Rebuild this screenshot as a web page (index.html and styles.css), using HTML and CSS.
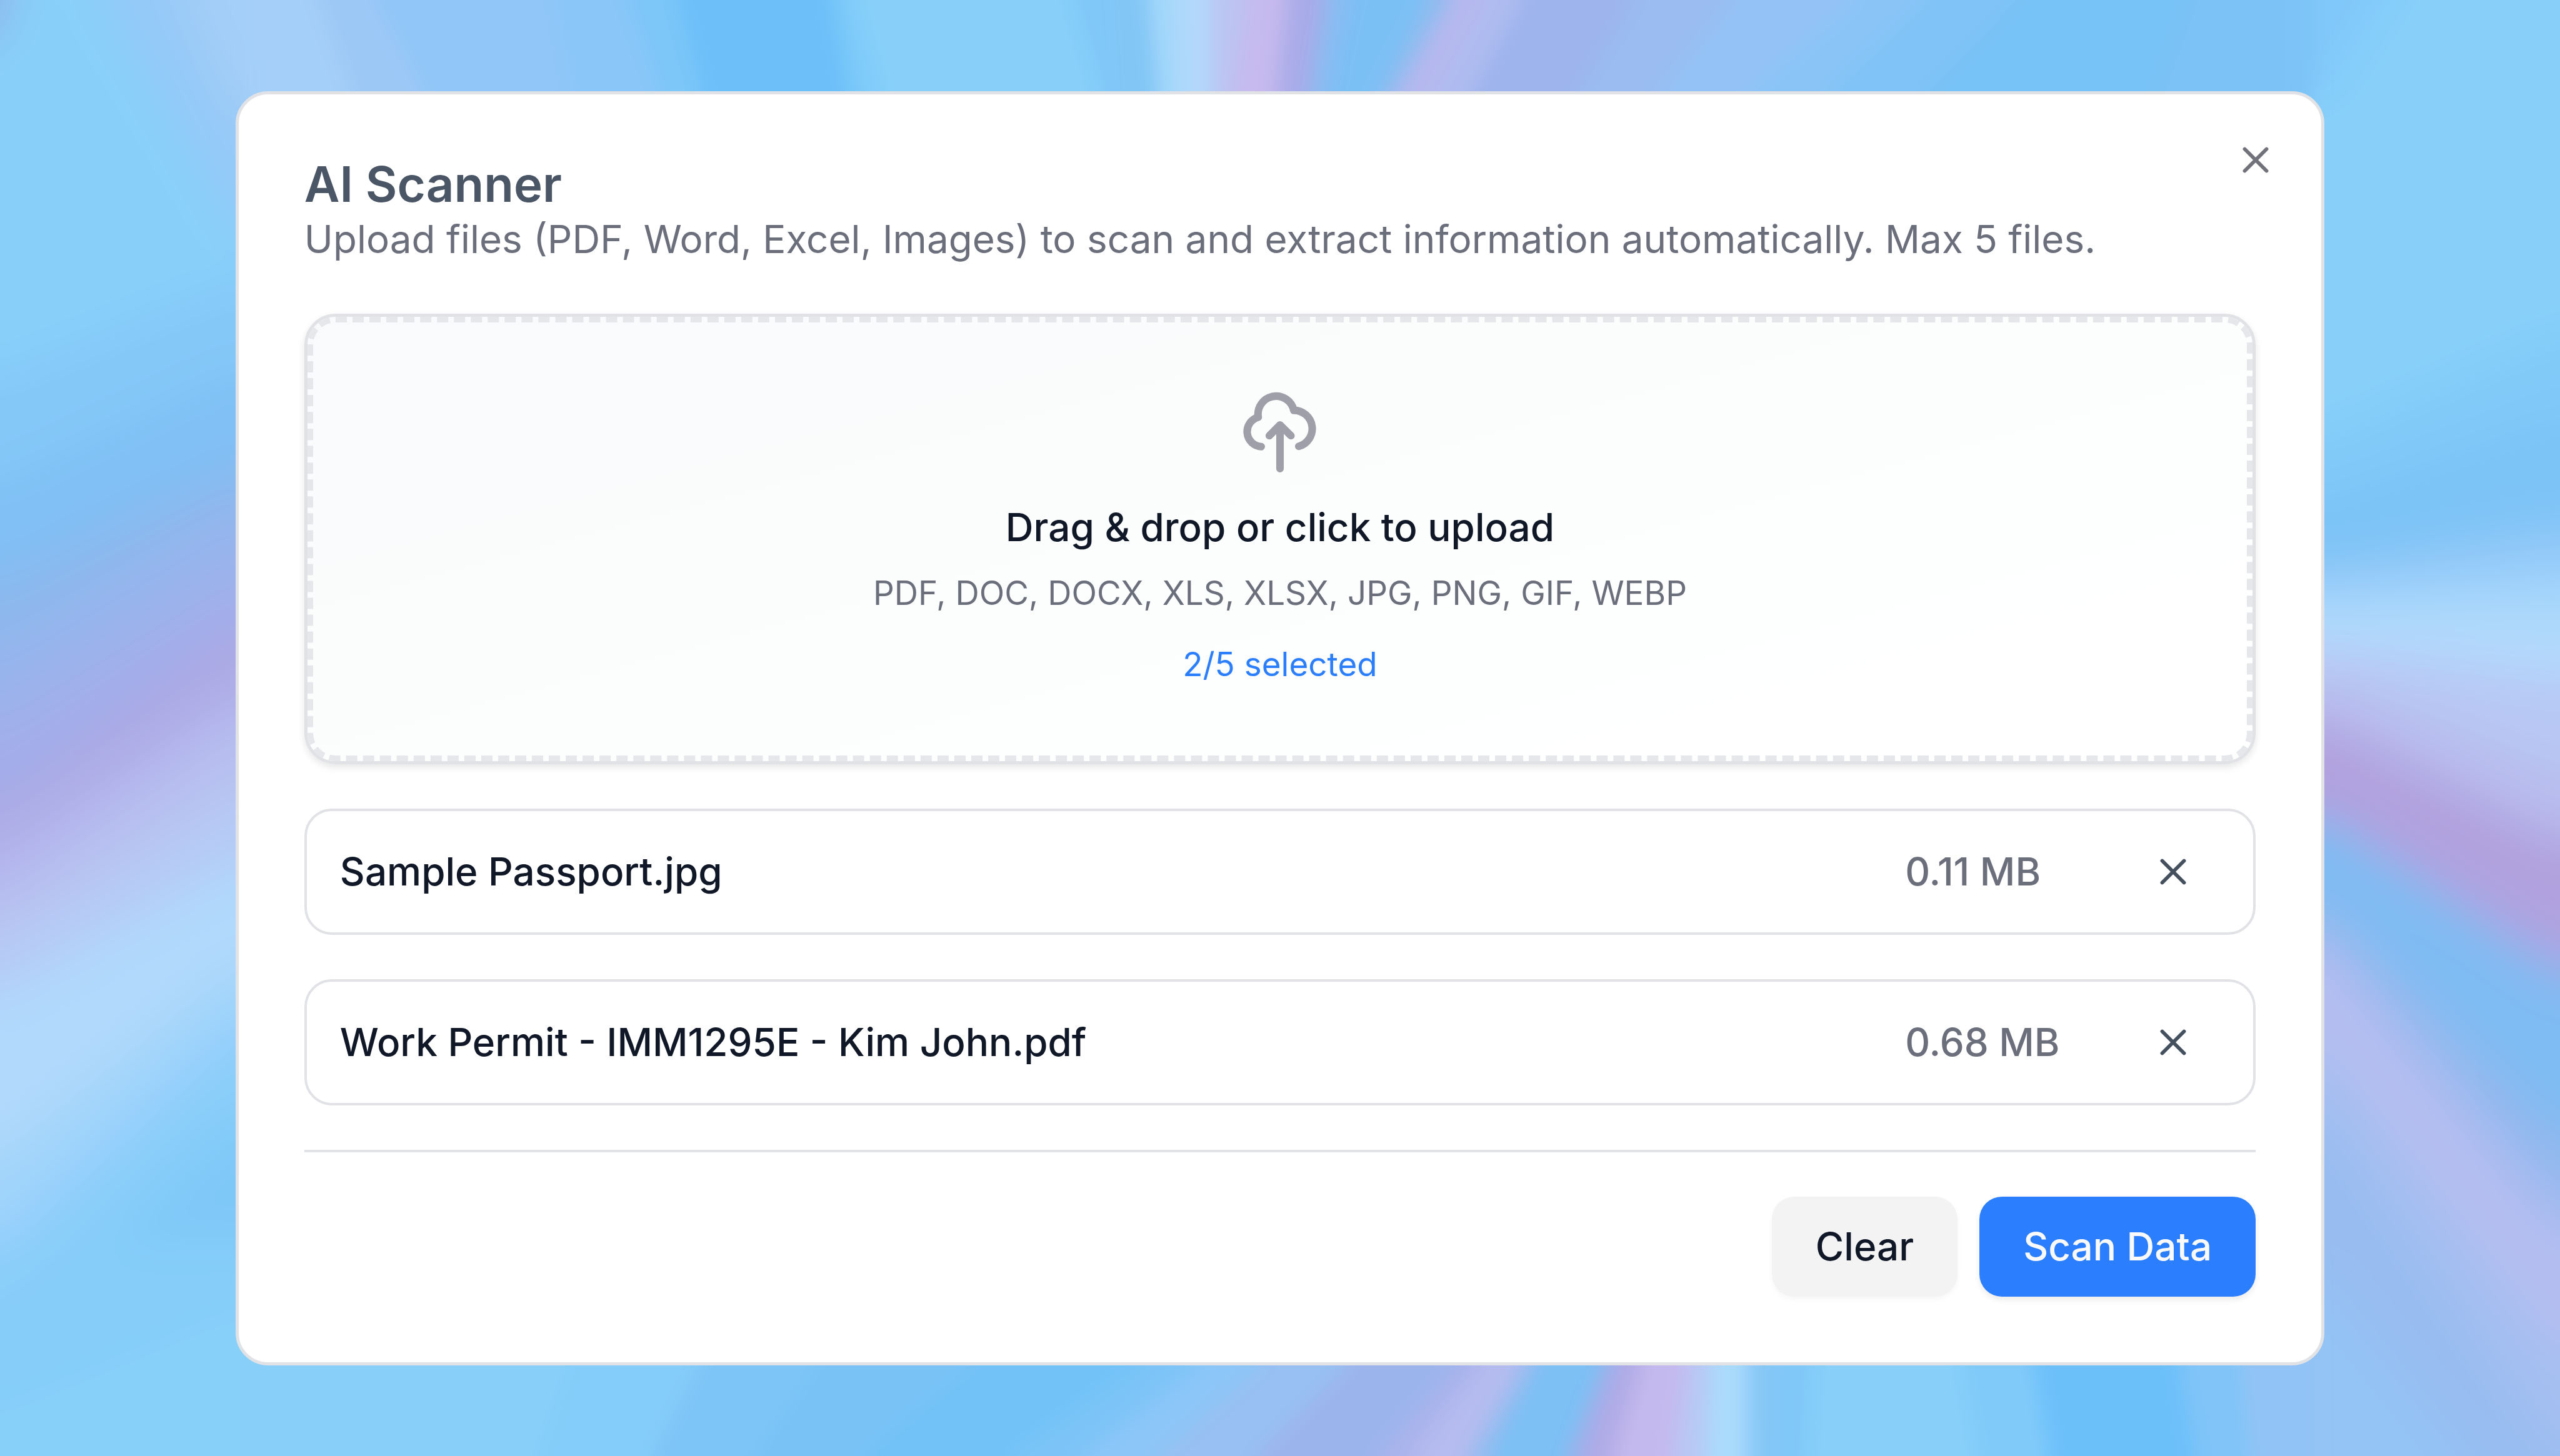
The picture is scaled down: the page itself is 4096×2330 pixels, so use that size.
FILE: index.html
```html
<!DOCTYPE html>
<html lang="en">
<head>
<meta charset="utf-8">
<meta name="viewport" content="width=device-width, initial-scale=1">
<title>AI Scanner</title>
<link rel="stylesheet" href="styles.css">
</head>
<body>
<svg class="backdrop" viewBox="0 0 1568 892" preserveAspectRatio="none" aria-hidden="true">
  <defs>
    <filter id="soft" filterUnits="userSpaceOnUse" x="-60" y="-60" width="1700" height="1020"><feGaussianBlur stdDeviation="14"/></filter>
    <filter id="fine" filterUnits="userSpaceOnUse" x="60" y="-80" width="1450" height="1060"><feGaussianBlur stdDeviation="6"/></filter>
  </defs>
  <rect x="-60" y="-60" width="1700" height="1020" fill="#88d0fa"/>
  <!-- left side -->
  <g filter="url(#soft)">
    <path fill="#88d0fa" d="M-60-60H800V960H-60Z"/>
    <path fill="#8fb6ea" d="M-60-60H20L0 28H-60Z"/>
    <path fill="#90cbf9" d="M55-60V0L145 150H190V-60Z"/>
    <path fill="#98c9f7" d="M85-60V0L145 120H190V-60Z"/>
    <path fill="#a4cff8" d="M115-60V0L145 70H190V-60Z"/>
    <path fill="#84c8f8" d="M-60 228H0L145 171H170V960H-60Z"/>
    <path fill="#80c0f4" d="M-60 296H0L145 228H170V960H-60Z"/>
    <path fill="#8cb8ee" d="M-60 353H0L145 285H170V960H-60Z"/>
    <path fill="#98b4ec" d="M-60 398H0L145 313H170V960H-60Z"/>
    <path fill="#a2aeea" d="M-60 438H0L145 353H170V960H-60Z"/>
    <path fill="#aca8e3" d="M-60 489H0L145 383H170V960H-60Z"/>
    <path fill="#b2b4ec" d="M-60 512H0L145 418H170V960H-60Z"/>
    <path fill="#b8c0f0" d="M-60 546H0L145 444H170V960H-60Z"/>
    <path fill="#b6caf6" d="M-60 569H0L145 484H170V960H-60Z"/>
    <path fill="#b0d9fc" d="M-60 609H0L145 529H170V960H-60Z"/>
    <path fill="#a2d4fb" d="M-60 706H0L145 592H170V960H-60Z"/>
    <path fill="#8ccefa" d="M-60 757H0L145 626H170V960H-60Z"/>
    <path fill="#86cdf9" d="M-60 797H0L145 671H170V960H-60Z"/>
    <path fill="#7ec8f8" d="M70 760L145 690H190V760H145Z"/>
    <path fill="#87d0fa" d="M-60 860H0L145 800H190V960H-60Z"/>
  </g>
  <!-- right side -->
  <g filter="url(#soft)">
    <path fill="#88d0fa" d="M1380-60H1640V960H1380Z"/>
    <path fill="#80c8f9" d="M1380-60H1500L1423 60H1380Z"/>
    <path fill="#80c9f8" d="M1380 267H1423L1568 205H1640V960H1380Z"/>
    <path fill="#7cc3f6" d="M1380 307H1423L1568 256H1640V960H1380Z"/>
    <path fill="#90c8f8" d="M1380 345H1423L1568 319H1640V960H1380Z"/>
    <path fill="#a6d6fb" d="M1380 362H1423L1568 350H1640V960H1380Z"/>
    <path fill="#b2dafc" d="M1380 376H1423L1568 381H1640V960H1380Z"/>
    <path fill="#b8c8f4" d="M1380 397H1423L1568 415H1640V960H1380Z"/>
    <path fill="#b8bcee" d="M1380 415H1423L1568 472H1640V960H1380Z"/>
    <path fill="#b1a1de" d="M1380 442H1423L1568 515H1640V960H1380Z"/>
    <path fill="#9ab0ea" d="M1380 497H1423L1568 585H1640V960H1380Z"/>
    <path fill="#7ebcf3" d="M1380 503H1423L1568 605H1640V960H1380Z"/>
    <path fill="#90b8ee" d="M1380 552H1423L1568 693H1640V960H1380Z"/>
    <path fill="#a8bcf0" d="M1380 569H1423L1568 735H1640V960H1380Z"/>
    <path fill="#b6bdf0" d="M1380 586H1423L1568 765H1640V960H1380Z"/>
    <path fill="#a6bff1" d="M1380 640H1423L1568 825H1640V960H1380Z"/>
    <path fill="#98bcf0" d="M1380 680H1423L1568 892H1640V960H1380Z"/>
    <path fill="#94c3f5" d="M1380 780H1423L1568 960H1380Z"/>
  </g>
  <!-- top edge -->
  <g filter="url(#fine)">
    <path fill="#a4cff8" d="M155-90V120H1415V-90Z"/>
    <path fill="#9cc8f6" d="M195-90V0L215 56V120H1415V-90Z"/>
    <path fill="#90c6f8" d="M230-90V0L260 56V120H1415V-90Z"/>
    <path fill="#8ac6f8" d="M340-90V0L350 56V120H1415V-90Z"/>
    <path fill="#7cc6f8" d="M385-90V0L405 56V120H1415V-90Z"/>
    <path fill="#6cbff9" d="M415-90V0L430 56V120H1415V-90Z"/>
    <path fill="#7ecaf9" d="M510-90V0L520 56V120H1415V-90Z"/>
    <path fill="#88d0fa" d="M525-90V0L540 56V120H1415V-90Z"/>
    <path fill="#80c8f8" d="M655-90V0L672 56V120H1415V-90Z"/>
    <path fill="#82c6f6" d="M680-90V0L684 56V120H1415V-90Z"/>
    <path fill="#a4d8fb" d="M704-90V0L710 56V120H1415V-90Z"/>
    <path fill="#b2d8fb" d="M722-90V0L724 56V120H1415V-90Z"/>
    <path fill="#bcc4f2" d="M742-90V0L742 56V120H1415V-90Z"/>
    <path fill="#c6baee" d="M764-90V0L756 56V120H1415V-90Z"/>
    <path fill="#a8abe8" d="M788-90V0L782 56V120H1415V-90Z"/>
    <path fill="#88bcf2" d="M812-90V0L802 56V120H1415V-90Z"/>
    <path fill="#7ac0f4" d="M828-90V0L816 56V120H1415V-90Z"/>
    <path fill="#90bcf0" d="M874-90V0L845 56L820 104V120H1415V-90Z"/>
    <path fill="#b6b8ee" d="M889-90V0L857 56L830 104V120H1415V-90Z"/>
    <path fill="#aebcf0" d="M912-90V0L880 56L852 104V120H1415V-90Z"/>
    <path fill="#9eb4ec" d="M932-90V0L902 56L876 104V120H1415V-90Z"/>
    <path fill="#9abcf0" d="M1000-90V0L965 56V120H1415V-90Z"/>
    <path fill="#94c2f6" d="M1060-90V0L1015 56V120H1415V-90Z"/>
    <path fill="#8ac4f7" d="M1135-90V0L1070 56V120H1415V-90Z"/>
    <path fill="#80c3f6" d="M1180-90V0L1120 56V120H1415V-90Z"/>
    <path fill="#77c2f6" d="M1235-90V0L1180 56V120H1415V-90Z"/>
    <path fill="#7cc2f6" d="M1340-90V0L1320 56V120H1415V-90Z"/>
  </g>
  <!-- bottom edge -->
  <g filter="url(#fine)">
    <path fill="#88d0fa" d="M155 770H1415V980H155Z"/>
    <path fill="#84ccf9" d="M350 770V835L330 892V980H1415V770Z"/>
    <path fill="#7ec5f7" d="M430 770V835L400 892V980H1415V770Z"/>
    <path fill="#78c2f6" d="M500 770V835L460 892V980H1415V770Z"/>
    <path fill="#72c2f8" d="M600 770V835L530 892V980H1415V770Z"/>
    <path fill="#7cc4f7" d="M700 770V835L620 892V980H1415V770Z"/>
    <path fill="#8cc6f8" d="M735 770V835L662 892V980H1415V770Z"/>
    <path fill="#98c0f2" d="M775 770V835L710 892V980H1415V770Z"/>
    <path fill="#9cb4ec" d="M828 770V835L770 892V980H1415V770Z"/>
    <path fill="#acb4ec" d="M895 770V835L845 892V980H1415V770Z"/>
    <path fill="#b6bcef" d="M910 770V835L866 892V980H1415V770Z"/>
    <path fill="#98bcf0" d="M932 770V835L898 892V980H1415V770Z"/>
    <path fill="#7cc0f4" d="M942 770V835L912 892V980H1415V770Z"/>
    <path fill="#9cb0ea" d="M982 770V835L960 892V980H1415V770Z"/>
    <path fill="#b0aae6" d="M991 770V835L970 892V980H1415V770Z"/>
    <path fill="#c4b9ee" d="M1006 770V835L988 892V980H1415V770Z"/>
    <path fill="#b8c8f4" d="M1034 770V835L1025 892V980H1415V770Z"/>
    <path fill="#aadbfc" d="M1048 770V835L1045 892V980H1415V770Z"/>
    <path fill="#86c6f6" d="M1070 770V835L1070 892V980H1415V770Z"/>
    <path fill="#80c8f8" d="M1087 770V835L1084 892V980H1415V770Z"/>
    <path fill="#88d0fa" d="M1112 770V835L1108 892V980H1415V770Z"/>
    <path fill="#80caf9" d="M1200 770V835L1210 892V980H1415V770Z"/>
    <path fill="#6cc0fa" d="M1245 770V835L1255 892V980H1415V770Z"/>
    <path fill="#80c4f8" d="M1335 770V835L1345 892V980H1415V770Z"/>
    <path fill="#92c3f6" d="M1372 770V835L1378 892V980H1415V770Z"/>
  </g>
</svg>

<main class="stage">
  <section class="dialog" role="dialog" aria-labelledby="dialog-title" aria-describedby="dialog-text">
    <button class="close" type="button" aria-label="Close">
      <svg class="x-icon" viewBox="0 0 24 24" aria-hidden="true"><path d="M18 6 6 18M6 6l12 12"/></svg>
    </button>

    <header class="header">
      <h1 class="title" id="dialog-title">AI Scanner</h1>
      <p class="description" id="dialog-text">Upload files (PDF, Word, Excel, Images) to scan and extract information automatically. Max 5 files.</p>
    </header>

    <div class="dropzone">
      <button class="dropzone-area" type="button">
        <svg class="upload-icon" viewBox="478 253 544 597" aria-hidden="true">
          <path d="M611 659A111 111 0 0 1 589 441A134 134 0 0 1 852 390A136 136 0 0 1 889 657"/>
          <path d="M750 822V498M671 578L750 498L831 578"/>
        </svg>
        <span class="dropzone-title">Drag &amp; drop or click to upload</span>
        <span class="dropzone-types">PDF, DOC, DOCX, XLS, XLSX, JPG, PNG, GIF, WEBP</span>
        <span class="dropzone-count">2/5 selected</span>
      </button>
    </div>

    <ul class="files">
      <li class="file">
        <span class="file-name">Sample Passport.jpg</span>
        <span class="file-size">0.11 MB</span>
        <button class="file-remove" type="button" aria-label="Remove Sample Passport.jpg">
          <svg class="x-icon" viewBox="0 0 24 24" aria-hidden="true"><path d="M18 6 6 18M6 6l12 12"/></svg>
        </button>
      </li>
      <li class="file">
        <span class="file-name">Work Permit - IMM1295E - Kim John.pdf</span>
        <span class="file-size">0.68 MB</span>
        <button class="file-remove" type="button" aria-label="Remove Work Permit - IMM1295E - Kim John.pdf">
          <svg class="x-icon" viewBox="0 0 24 24" aria-hidden="true"><path d="M18 6 6 18M6 6l12 12"/></svg>
        </button>
      </li>
    </ul>

    <footer class="actions">
      <button class="button button-secondary" type="button">Clear</button>
      <button class="button button-primary" type="button">Scan Data</button>
    </footer>
  </section>
</main>
</body>
</html>
```
FILE: styles.css
```css
* {
  box-sizing: border-box;
}

body {
  margin: 0;
  color: #101828;
  background: #88d0fa;
  font-family: Inter, "Liberation Sans", sans-serif;
  font-size: 62px;
  line-height: 88px;
}

button {
  margin: 0;
  padding: 0;
  border: 0;
  background: none;
  color: inherit;
  font: inherit;
  cursor: pointer;
}

.backdrop {
  position: fixed;
  inset: 0;
  z-index: -1;
  width: 100%;
  height: 100%;
}

.stage {
  display: grid;
  align-items: center;
  min-height: 100vh;
  padding: 72px 9.2vw;
}

.dialog {
  position: relative;
  display: flex;
  flex-direction: column;
  gap: 71px;
  padding: 100px 105px 105px;
  border: 5px solid #e1e2e6;
  border-radius: 52px;
  background: #fff;
}

.close {
  position: absolute;
  top: 70px;
  right: 70px;
  display: flex;
  color: #71717b;
}

.x-icon {
  display: block;
  width: 70px;
  height: 70px;
  fill: none;
  stroke: currentColor;
  stroke-width: 2;
  stroke-linecap: round;
  stroke-linejoin: round;
}

.header {
  display: flex;
  flex-direction: column;
  padding-bottom: 4px;
}

.title {
  margin: 0;
  color: #4a5565;
  font-size: 78px;
  font-weight: 600;
  line-height: 88px;
}

.description {
  margin: 0;
  color: #6b6f7c;
}

.dropzone {
  border: 5px solid #e1e2e6;
  border-radius: 50px;
  background: linear-gradient(165deg, #f9fafc, #fcfefd 50%, #fff);
  box-shadow: 0 5px 12px rgba(0, 0, 0, 0.1);
}

.dropzone-area {
  display: flex;
  flex-direction: column;
  align-items: center;
  width: 100%;
  padding: 111px 53px;
  border: 9px dashed #e5e7eb;
  border-radius: 45px;
}

.upload-icon {
  width: 118px;
  height: 129px;
  margin-bottom: 44px;
  fill: none;
  stroke: #9f9fa9;
  stroke-width: 56;
  stroke-linecap: round;
  stroke-linejoin: round;
}

.dropzone-title {
  font-weight: 500;
}

.dropzone-types,
.dropzone-count {
  font-size: 53px;
  line-height: 70px;
}

.dropzone-types {
  margin-top: 26px;
  color: #6b6f7c;
}

.dropzone-count {
  margin-top: 44px;
  color: #2b7fff;
}

.files {
  display: flex;
  flex-direction: column;
  gap: 71px;
  margin: 0;
  padding: 0;
  list-style: none;
}

.file {
  display: grid;
  grid-template-columns: 1fr 354px 150px;
  align-items: center;
  padding: 22px 53px;
  border: 4px solid #e1e2e6;
  border-radius: 44px;
  font-weight: 500;
}

.file-size {
  color: #6b6f7c;
}

.file-remove {
  display: grid;
  place-items: center;
  height: 150px;
  color: #45505f;
}

.actions {
  display: flex;
  justify-content: flex-end;
  gap: 35px;
  padding-top: 71px;
  border-top: 4px solid #e1e2e6;
}

.button {
  padding: 36px 70px;
  border-radius: 36px;
  font-weight: 500;
}

.button-secondary {
  background: #f3f3f4;
  box-shadow: 0 4px 8px rgba(0, 0, 0, 0.04);
}

.button-primary {
  background: #2b7fff;
  box-shadow: 0 5px 10px rgba(0, 0, 0, 0.08);
  color: #fafafa;
}
```
